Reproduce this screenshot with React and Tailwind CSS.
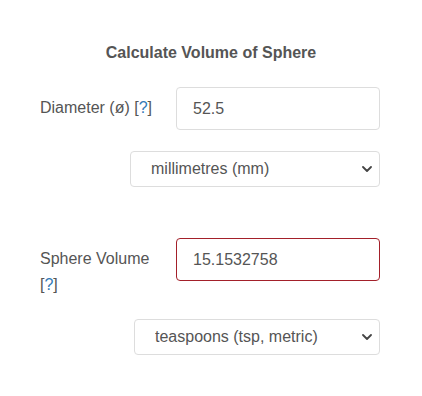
import React, { useState } from 'react';

// Small chevron drawn for the custom selects
function Chevron() {
  return (
    <svg className="pointer-events-none absolute right-[8px] top-1/2 -translate-y-1/2" width="10" height="6" viewBox="0 0 10 6" fill="none">
      <path d="M1 1l4 4 4-4" stroke="#444" strokeWidth="1.8" strokeLinecap="round" strokeLinejoin="round" />
    </svg>
  );
}

function Help() {
  return (
    <span>
      [<span className="text-[#337ab7]">?</span>]
    </span>
  );
}

export default function App() {
  const [diameter, setDiameter] = useState('52.5');
  const [unit, setUnit] = useState('mm');
  const [volUnit, setVolUnit] = useState('tsp');

  return (
    <div className="w-[422px] h-[396px] bg-white text-[#555] font-['Liberation_Sans',Arial,sans-serif] text-[16px]">
      <div className="pt-[41px] pl-[40px] pr-[42px]">
        <h2 className="text-center font-bold leading-[24px] pl-[2px]">Calculate Volume of Sphere</h2>

        {/* Diameter row */}
        <div className="flex mt-[22px]">
          <label className="w-[136px] shrink-0 pt-[8px] leading-[26px] pr-[8px]">
            Diameter (ø) <Help />
          </label>
          <input
            value={diameter}
            onChange={(e) => setDiameter(e.target.value)}
            className="flex-1 min-w-0 h-[43px] border border-[#ddd] rounded-[4px] px-[16px] text-[#555] outline-none"
          />
        </div>
        <div className="flex justify-end mt-[21px]">
          <div className="relative w-[250px]">
            <select
              value={unit}
              onChange={(e) => setUnit(e.target.value)}
              className="appearance-none w-full h-[36px] border border-[#ddd] rounded-[4px] pl-[20px] text-[#555] bg-white outline-none"
            >
              <option value="mm">millimetres (mm)</option>
              <option value="cm">centimetres (cm)</option>
              <option value="m">metres (m)</option>
            </select>
            <Chevron />
          </div>
        </div>

        {/* Volume row */}
        <div className="flex mt-[51px]">
          <label className="w-[136px] shrink-0 pt-[8px] leading-[26px] pr-[20px]">
            Sphere Volume <Help />
          </label>
          <input
            readOnly
            value="15.1532758"
            className="flex-1 min-w-0 h-[43px] border border-[#a3202a] rounded-[4px] px-[16px] text-[#555] outline-none"
          />
        </div>
        <div className="flex justify-end mt-[21px]">
          <div className="relative w-[246px]">
            <select
              value={volUnit}
              onChange={(e) => setVolUnit(e.target.value)}
              className="appearance-none w-full h-[36px] border border-[#ddd] rounded-[4px] pl-[20px] text-[#555] bg-white outline-none"
            >
              <option value="tsp">teaspoons (tsp, metric)</option>
              <option value="ml">millilitres (ml)</option>
            </select>
            <Chevron />
          </div>
        </div>
      </div>
    </div>
  );
}
